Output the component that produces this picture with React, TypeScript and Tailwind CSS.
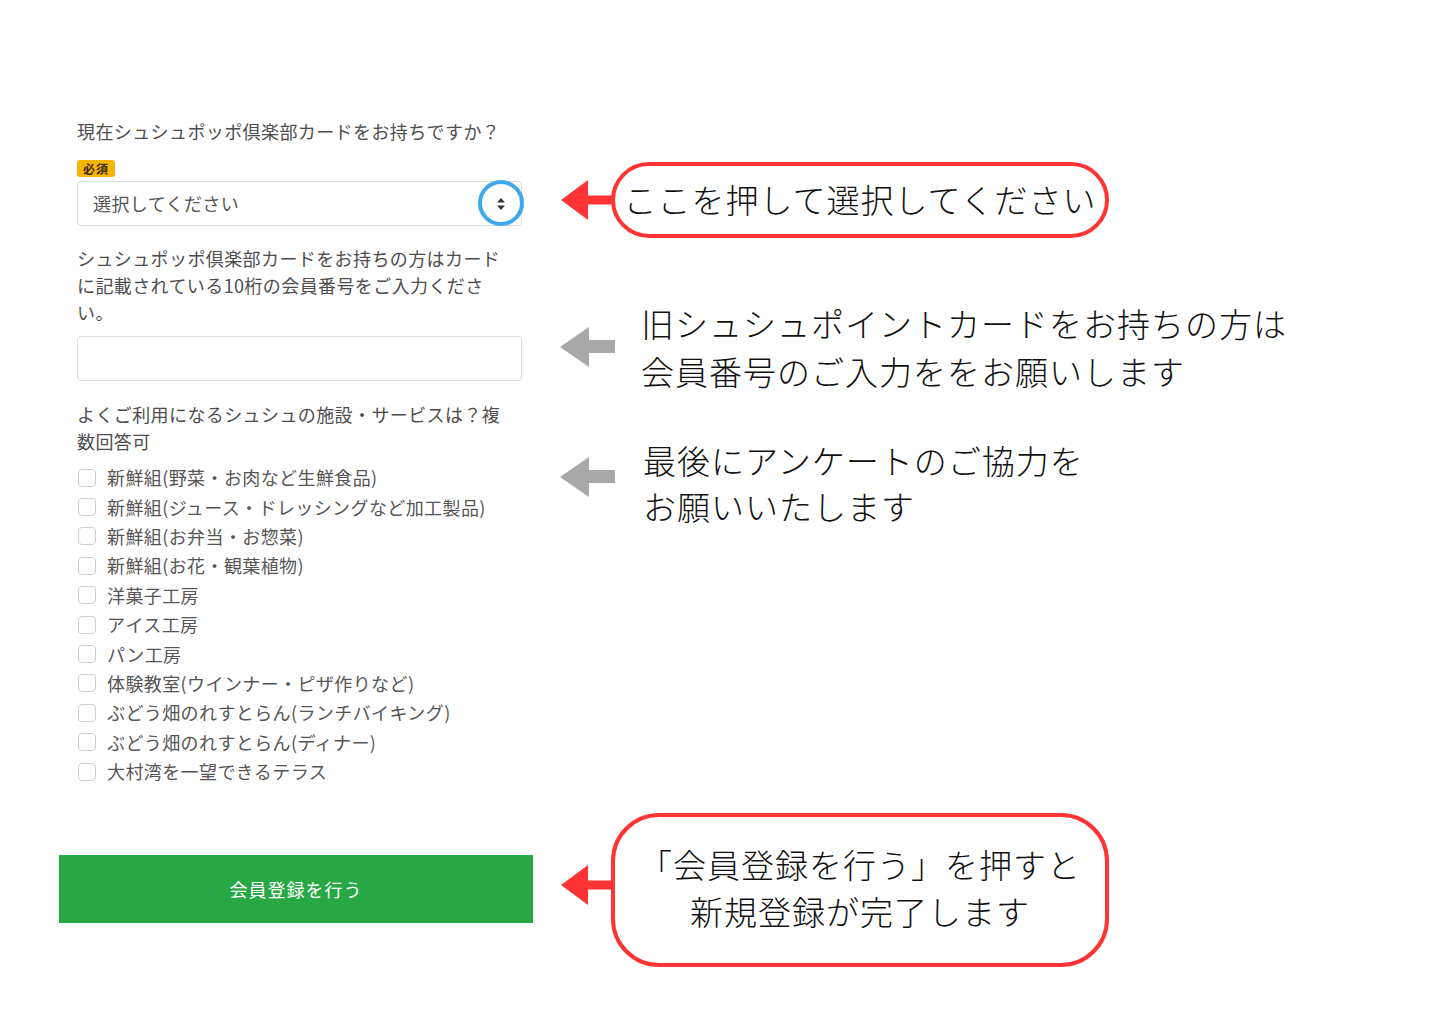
const services = [
  "新鮮組(野菜・お肉など生鮮食品)",
  "新鮮組(ジュース・ドレッシングなど加工製品)",
  "新鮮組(お弁当・お惣菜)",
  "新鮮組(お花・観葉植物)",
  "洋菓子工房",
  "アイス工房",
  "パン工房",
  "体験教室(ウインナー・ピザ作りなど)",
  "ぶどう畑のれすとらん(ランチバイキング)",
  "ぶどう畑のれすとらん(ディナー)",
  "大村湾を一望できるテラス",
];

function RedArrow() {
  return (
    <svg width="54" height="42" viewBox="0 0 54 42" className="shrink-0">
      <polygon points="1,21 28,1 28,16.5 54,16.5 54,25.5 28,25.5 28,41" fill="#ff3535" />
    </svg>
  );
}

function GrayArrow() {
  return (
    <svg width="55" height="40" viewBox="0 0 55 40" className="shrink-0">
      <polygon points="0,20 29,0 29,13 55,13 55,26 29,26 29,40" fill="#a8a8a8" />
    </svg>
  );
}

function SelectArrows() {
  return (
    <svg width="10" height="14" viewBox="0 0 10 14">
      <polygon points="5,1 9,5.5 1,5.5" fill="#333" />
      <polygon points="5,13 9,8.5 1,8.5" fill="#333" />
    </svg>
  );
}

export default function App() {
  return (
    <div
      className="w-[1440px] h-[1018px] bg-white flex overflow-hidden"
      style={{ fontFamily: '"Noto Sans CJK JP", "Noto Sans", sans-serif' }}
    >
      {/* form */}
      <div className="ml-[59px] w-[474px] pt-[118px]">
        <div className="pl-[18px] pr-[11px] text-[18px] leading-[27px] tracking-[0.4px] text-[#4d4d4d]">
          <p>現在シュシュポッポ倶楽部カードをお持ちですか？</p>
          <div className="mt-[15px] flex">
            <span className="h-[17px] px-[6px] rounded-[3px] bg-[#f7b500] text-[12px] leading-[17px] font-bold tracking-[1px] text-[#3a2a00]">
              必須
            </span>
          </div>
          <div className="relative mt-[4px] h-[45px] border border-[#dcdcdc] rounded-[4px] flex items-center justify-between pl-[15px] pr-[15px]">
            <span className="text-[#555]">選択してください</span>
            <SelectArrows />
            <div className="absolute right-[-3px] top-[-2px] w-[46px] h-[46px] rounded-full border-[4px] border-[#3ea8ef]"></div>
          </div>
          <p className="mt-[19px]">
            シュシュポッポ倶楽部カードをお持ちの方はカード
            <br />
            に記載されている10桁の会員番号をご入力くださ
            <br />
            い。
          </p>
          <div className="mt-[10px] h-[45px] border border-[#dcdcdc] rounded-[4px]"></div>
          <p className="mt-[20px]">
            よくご利用になるシュシュの施設・サービスは？複
            <br />
            数回答可
          </p>
          <div className="mt-[8px]">
            {services.map((s) => (
              <div key={s} className="h-[29.4px] flex items-center">
                <span className="w-[18px] h-[18px] ml-[1px] border border-[#cfcfcf] rounded-[4px] shrink-0"></span>
                <span className="ml-[11px] text-[#555] whitespace-nowrap">{s}</span>
              </div>
            ))}
          </div>
        </div>
        <div className="mt-[69px] h-[68px] bg-[#28a745] flex items-center justify-center text-white text-[18px] tracking-[1px]">
          会員登録を行う
        </div>
      </div>

      {/* annotations */}
      <div className="ml-[27px] pt-[162px] text-[#111] text-[33px] tracking-[1px]" style={{ fontWeight: 300 }}>
        <div className="flex items-center">
          <RedArrow />
          <div className="-ml-[3px] w-[498px] h-[76px] rounded-full border-[4px] border-[#ff3535] flex items-center justify-center">
            ここを押して選択してください
          </div>
        </div>

        <div className="mt-[61px] flex items-center">
          <GrayArrow />
          <p className="ml-[26px] leading-[48px] whitespace-nowrap">
            旧シュシュポイントカードをお持ちの方は
            <br />
            会員番号のご入力ををお願いします
          </p>
        </div>

        <div className="mt-[42px] flex items-start">
          <div className="mt-[20px]">
            <GrayArrow />
          </div>
          <p className="ml-[28px] leading-[46px] whitespace-nowrap">
            最後にアンケートのご協力を
            <br />
            お願いいたします
          </p>
        </div>

        <div className="mt-[284px] flex items-start">
          <div className="mt-[51px]">
            <RedArrow />
          </div>
          <div className="-ml-[3px] w-[498px] h-[154px] rounded-[48px] border-[4px] border-[#ff3535] flex items-center justify-center">
            <p className="text-center leading-[47px] -mt-[4px]">
              「会員登録を行う」を押すと
              <br />
              新規登録が完了します
            </p>
          </div>
        </div>
      </div>
    </div>
  );
}
